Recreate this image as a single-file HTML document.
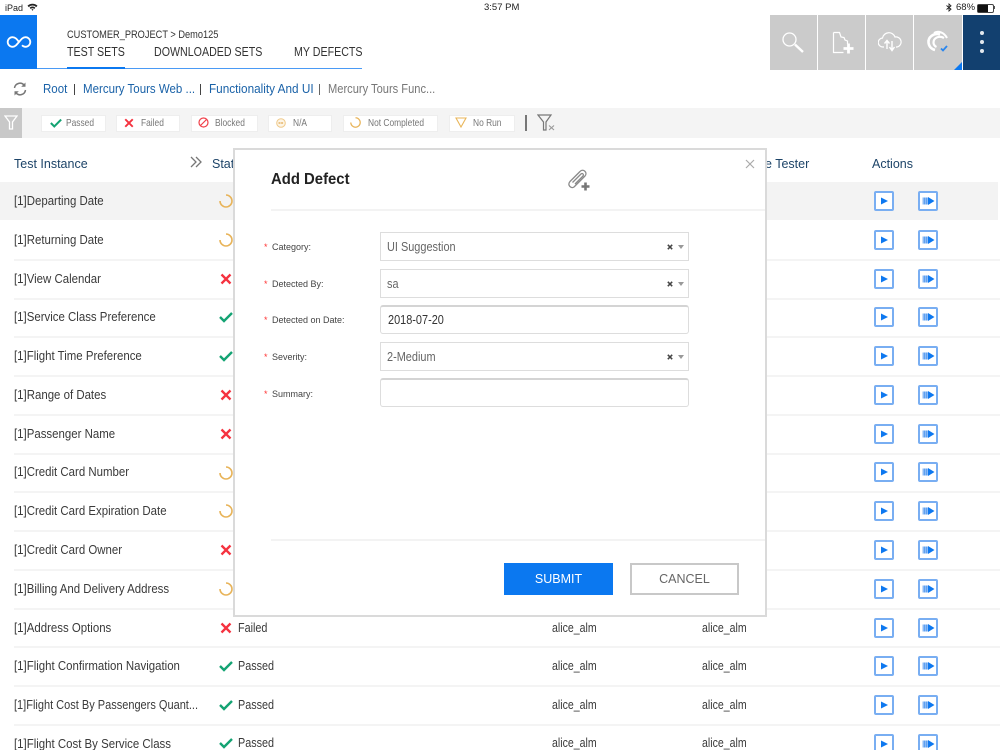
<!DOCTYPE html>
<html><head><meta charset="utf-8"><style>
html,body{margin:0;padding:0;background:#fff}
#p{position:relative;width:1000px;height:750px;overflow:hidden;background:#fff;font-family:"Liberation Sans",sans-serif;color:#333}
#p div,#p svg,#p span{position:absolute}
.t{white-space:nowrap;line-height:16px;font-size:12px;transform-origin:0 50%}
.n{left:14px;font-size:12.5px;color:#3a3a3a;transform:scaleX(.915)}
.l{height:2px;left:14px;width:986px;background:#f4f4f4}
.c{top:115px;height:15px;background:#fff;border:1px solid #eee}
.f{font-size:10.5px;color:#777;transform:scaleX(.8);top:115px}
.bl{color:#1a62a8;font-size:13px;top:81px;transform:scaleX(.885)}
.h{top:156px;font-size:12.5px;color:#1d4468}
.lab{left:272px;font-size:9px;color:#444}
.st{left:264px;font-size:9px;color:#f33}
.inp{left:380px;width:307px;height:27px;background:#fff;border:1px solid #ddd}
.r{border-radius:3px;border-top:2px solid #d4d4d4;height:26px}
.v{left:387px;font-size:13px;color:#666;transform:scaleX(.84)}
.ar{left:678px;width:0;height:0;border-left:3px solid transparent;border-right:3px solid transparent;border-top:4px solid #999}
.tb{top:15px;width:47px;height:55px;background:#cbcbcb}
.d{font-size:12.5px;color:#3a3a3a;transform:scaleX(.865)}
.a{transform:scaleX(.845)}
.hd{font-size:13px;top:44px;color:#333;transform:scaleX(.82)}
</style></head><body><div id="p">
<svg width="0" height="0"><defs>
<g id="pa"><rect x="1" y="1" width="18" height="18" fill="#fff" stroke="#79aef2" stroke-width="2" rx="1"/><path d="M7 6.500L14 10L7 13.500Z" fill="#0d78f0"/></g>
<g id="pb"><rect x="1" y="1" width="18" height="18" fill="#fff" stroke="#79aef2" stroke-width="2" rx="1"/><path d="M4.500 6.500h5.500v7H4.500z" fill="#8dbbf5"/><path d="M6 6.500h.7v7H6zM8 6.500h.7v7H8z" fill="#4c96ee"/><path d="M10 6L16.500 10L10 14Z" fill="#0d78f0"/></g>
<path id="ok" d="M1 7L5 11L13 3" fill="none" stroke="#14a373" stroke-width="2.4"/>
<path id="no" d="M1.500 1.500L10.500 10.500M10.500 1.500L1.500 10.500" fill="none" stroke="#f5323f" stroke-width="2.300"/>
<path id="sp" d="M7 1A6 6 0 1 1 1 7" fill="none" stroke="#e8b45a" stroke-width="1.600"/>
</defs></svg>

<!-- status bar -->
<div class="t" style="left:5px;top:0;font-size:9px;color:#222">iPad</div>
<svg style="left:27px;top:3px" width="11" height="8" viewBox="0 0 11 8"><path d="M0.500 2.800A7 7 0 0 1 10.500 2.800L9.200 4.100A5.200 5.200 0 0 0 1.800 4.100ZM2.600 4.800A4 4 0 0 1 8.400 4.800L7.200 6A2.400 2.400 0 0 0 3.800 6ZM4.500 6.600A1.200 1.200 0 0 1 6.500 6.600L5.500 7.800Z" fill="#222"/></svg>
<div class="t" style="left:484px;top:0;font-size:9.500px;color:#222">3:57 PM</div>
<svg style="left:946px;top:3px" width="6" height="9" viewBox="0 0 6 9"><path d="M0.500 2.500L5 6.200L3 8V1L5 2.800L0.500 6.500" fill="none" stroke="#222" stroke-width="0.900"/></svg>
<div class="t" style="left:956px;top:0;font-size:9.500px;color:#222">68%</div>
<div style="left:977px;top:4px;width:15px;height:7px;border:1px solid #444;border-radius:2px"></div>
<div style="left:978px;top:5px;width:10px;height:7px;background:#111"></div>
<div style="left:994px;top:6px;width:1px;height:3px;background:#555"></div>

<!-- header -->
<div style="left:0;top:15px;width:37px;height:54px;background:#0b78f0"></div>
<svg style="left:6px;top:34px" width="26" height="16" viewBox="0 0 26 16"><path d="M13 8C10.500 4.500 9 3.200 6.500 3.200A4.800 4.800 0 0 0 6.500 12.800C9 12.800 10.500 11 13 8C15.500 5 17 3.200 19.500 3.200A4.800 4.800 0 0 1 19.500 12.800C18 12.800 17 12.200 16 11.200" fill="none" stroke="#fff" stroke-width="1.800"/></svg>
<div class="t" style="left:67px;top:27px;font-size:11px;color:#333;transform:scaleX(.84)">CUSTOMER_PROJECT &gt; Demo125</div>
<div class="t hd" style="left:67px">TEST SETS</div>
<div class="t hd" style="left:154px">DOWNLOADED SETS</div>
<div class="t hd" style="left:294px">MY DEFECTS</div>
<div style="left:37px;top:68px;width:325px;height:1px;background:#4a9af5"></div>
<div style="left:67px;top:67px;width:58px;height:2px;background:#0b78f0"></div>

<div class="tb" style="left:770px"></div><div class="tb" style="left:818px"></div><div class="tb" style="left:866px"></div><div class="tb" style="left:914px;width:48px"></div>
<div style="left:963px;top:15px;width:37px;height:55px;background:#12406f"></div>
<svg style="left:780px;top:30px" width="26" height="24" viewBox="0 0 26 24"><circle cx="9.500" cy="9.500" r="6.500" fill="none" stroke="#fff" stroke-width="1.300"/><path d="M15 14.500L23 22" stroke="#fff" stroke-width="2.400"/></svg>
<svg style="left:832px;top:31px" width="24" height="24" viewBox="0 0 24 24"><path d="M1.500 1.500H7.500L9 6L12 6.500L13 9L15.500 10V13M1.500 1.500V21.500H11.500" fill="none" stroke="#fff" stroke-width="1.200"/><path d="M16.500 12.500V22.500M11.500 17.500H21.500" stroke="#fff" stroke-width="2.800"/></svg>
<svg style="left:878px;top:30px" width="24" height="24" viewBox="0 0 24 24"><path d="M6 17H5A4.500 4.500 0 0 1 4.500 8A6.500 6.500 0 0 1 17 7A5 5 0 0 1 19 17H18" fill="none" stroke="#fff" stroke-width="1.200"/><path d="M9 19V11M6.500 13.500L9 10.500L11.500 13.500M14 11V19.500M11.500 17L14 20.500L16.500 17" fill="none" stroke="#fff" stroke-width="1.400"/></svg>
<svg style="left:925px;top:29px" width="26" height="25" viewBox="0 0 26 25"><path d="M9 4C13 1.500 19 3 22 9" fill="none" stroke="#fff" stroke-width="2"/><path d="M15 5.500C9 3.500 3 8 3.500 13.500C3.800 17 6 20 10 21" fill="none" stroke="#fff" stroke-width="2.600"/><path d="M19 9C14 6 8.500 9 8.500 13.500C8.500 15.500 9.500 17 11.500 18" fill="none" stroke="#fff" stroke-width="2.200"/><path d="M16 19.500L18 21.500L22 17" fill="none" stroke="#2a86ee" stroke-width="1.800"/></svg>
<div style="left:954px;top:62px;width:0;height:0;border-left:8px solid transparent;border-bottom:8px solid #0b78f0"></div>
<div style="left:979.500px;top:31px;width:4px;height:4px;background:#e2e8ee;border-radius:50%"></div>
<div style="left:979.500px;top:40px;width:4px;height:4px;background:#e2e8ee;border-radius:50%"></div>
<div style="left:979.500px;top:49px;width:4px;height:4px;background:#e2e8ee;border-radius:50%"></div>

<!-- breadcrumbs -->
<svg style="left:13px;top:82px" width="14" height="14" viewBox="0 0 14 14"><path d="M1.500 6A5.500 5.500 0 0 1 11 3M12.500 8A5.500 5.500 0 0 1 3 11" fill="none" stroke="#777" stroke-width="1.500"/><path d="M12.500 0.500V4.800H8.200ZM1.500 13.500V9.200H5.800Z" fill="#777"/></svg>
<div class="t bl" style="left:43px">Root</div>
<div style="left:74px;top:84px;width:1px;height:11px;background:#444"></div>
<div class="t bl" style="left:83px">Mercury Tours Web ...</div>
<div style="left:200px;top:84px;width:1px;height:11px;background:#444"></div>
<div class="t bl" style="left:209px;transform:scaleX(.905)">Functionality And UI</div>
<div style="left:319px;top:84px;width:1px;height:11px;background:#666"></div>
<div class="t bl" style="left:328px;color:#777;transform:scaleX(.855)">Mercury Tours Func...</div>

<!-- filter bar -->
<div style="left:0;top:108px;width:1000px;height:30px;background:#f4f4f4"></div>
<div style="left:0;top:108px;width:22px;height:30px;background:#c8c8c8"></div>
<svg style="left:4px;top:115px" width="14" height="15" viewBox="0 0 14 15"><path d="M1 1H13L8.500 7V14H5.500V7Z" fill="none" stroke="#fff" stroke-width="1.300"/></svg>

<div class="c" style="left:41px;width:63px"></div>
<svg style="left:49px;top:117px" width="14" height="12" viewBox="0 0 14 14"><use href="#ok"/></svg>
<div class="t f" style="left:66px">Passed</div>
<div class="c" style="left:116px;width:62px"></div>
<svg style="left:124px;top:118px" width="10" height="10" viewBox="0 0 12 12"><use href="#no"/></svg>
<div class="t f" style="left:141px">Failed</div>
<div class="c" style="left:191px;width:65px"></div>
<svg style="left:198px;top:117px" width="11" height="11" viewBox="0 0 11 11"><circle cx="5.500" cy="5.500" r="4.500" fill="none" stroke="#f0404a" stroke-width="1.200"/><path d="M2.500 8.500L8.500 2.500" stroke="#f0404a" stroke-width="1.200"/></svg>
<div class="t f" style="left:215px">Blocked</div>
<div class="c" style="left:268px;width:62px"></div>
<svg style="left:276px;top:118px" width="10" height="10" viewBox="0 0 10 10"><circle cx="5" cy="5" r="4.300" fill="#fdf5e6" stroke="#efc98a" stroke-width="1"/><path d="M2.500 5H7.500" stroke="#e5b468" stroke-width="1.400" stroke-dasharray="2 .6"/></svg>
<div class="t f" style="left:293px">N/A</div>
<div class="c" style="left:343px;width:93px"></div>
<svg style="left:350px;top:117px" width="11" height="11" viewBox="0 0 14 14"><use href="#sp"/></svg>
<div class="t f" style="left:368px">Not Completed</div>
<div class="c" style="left:449px;width:64px"></div>
<svg style="left:455px;top:117px" width="12" height="11" viewBox="0 0 12 11"><path d="M1 1H11L6 10Z" fill="none" stroke="#e9b65a" stroke-width="1.100"/></svg>
<div class="t f" style="left:473px">No Run</div>
<div style="left:525px;top:115px;width:2px;height:16px;background:#777"></div>
<svg style="left:537px;top:114px" width="19" height="17" viewBox="0 0 19 17"><path d="M1 1H14L9 8V16H6.500V8Z" fill="none" stroke="#777" stroke-width="1.200"/><path d="M12 11.500L17 16M17 11.500L12 16" stroke="#999" stroke-width="1.100"/></svg>

<!-- table head -->
<div class="t h" style="left:14px">Test Instance</div>
<svg style="left:190px;top:156px" width="13" height="12" viewBox="0 0 13 12"><path d="M1 1L6 6L1 11M6 1L11 6L6 11" fill="none" stroke="#777" stroke-width="1.300"/></svg>
<div class="t h" style="left:212px">Status</div>
<div class="t h" style="left:765px">e Tester</div>
<div class="t h" style="left:872px">Actions</div>

<!-- rows -->
<div style="left:0;top:182px;width:998px;height:38px;background:#f3f3f3"></div>
<div class="l" style="top:259px"></div><div class="l" style="top:298px"></div><div class="l" style="top:336px"></div><div class="l" style="top:375px"></div><div class="l" style="top:414px"></div><div class="l" style="top:453px"></div><div class="l" style="top:491px"></div><div class="l" style="top:530px"></div><div class="l" style="top:569px"></div><div class="l" style="top:608px"></div><div class="l" style="top:646px"></div><div class="l" style="top:685px"></div><div class="l" style="top:724px"></div>

<div class="t n" style="top:193px">[1]Departing Date</div>
<div class="t n" style="top:232px">[1]Returning Date</div>
<div class="t n" style="top:271px">[1]View Calendar</div>
<div class="t n" style="top:309px">[1]Service Class Preference</div>
<div class="t n" style="top:348px">[1]Flight Time Preference</div>
<div class="t n" style="top:387px">[1]Range of Dates</div>
<div class="t n" style="top:426px">[1]Passenger Name</div>
<div class="t n" style="top:464px">[1]Credit Card Number</div>
<div class="t n" style="top:503px">[1]Credit Card Expiration Date</div>
<div class="t n" style="top:542px">[1]Credit Card Owner</div>
<div class="t n" style="top:581px">[1]Billing And Delivery Address</div>
<div class="t n" style="top:620px">[1]Address Options</div>
<div class="t n" style="top:658px">[1]Flight Confirmation Navigation</div>
<div class="t n" style="top:697px;transform:scaleX(.88)">[1]Flight Cost By Passengers Quant...</div>
<div class="t n" style="top:736px">[1]Flight Cost By Service Class</div>

<svg style="left:218.500px;top:194px" width="14" height="14"><use href="#sp"/></svg>
<svg style="left:218.500px;top:233px" width="14" height="14"><use href="#sp"/></svg>
<svg style="left:220px;top:273px" width="12" height="12"><use href="#no"/></svg>
<svg style="left:219px;top:310px" width="14" height="14"><use href="#ok"/></svg>
<svg style="left:219px;top:349px" width="14" height="14"><use href="#ok"/></svg>
<svg style="left:220px;top:389px" width="12" height="12"><use href="#no"/></svg>
<svg style="left:220px;top:428px" width="12" height="12"><use href="#no"/></svg>
<svg style="left:218.500px;top:466px" width="14" height="14"><use href="#sp"/></svg>
<svg style="left:218.500px;top:504px" width="14" height="14"><use href="#sp"/></svg>
<svg style="left:220px;top:544px" width="12" height="12"><use href="#no"/></svg>
<svg style="left:218.500px;top:582px" width="14" height="14"><use href="#sp"/></svg>
<svg style="left:220px;top:622px" width="12" height="12"><use href="#no"/></svg>
<svg style="left:219px;top:659px" width="14" height="14"><use href="#ok"/></svg>
<svg style="left:219px;top:698px" width="14" height="14"><use href="#ok"/></svg>
<svg style="left:219px;top:736px" width="14" height="14"><use href="#ok"/></svg>

<div class="t d" style="left:238px;top:620px">Failed</div>
<div class="t d" style="left:238px;top:658px">Passed</div>
<div class="t d" style="left:238px;top:697px">Passed</div>
<div class="t d" style="left:238px;top:735px">Passed</div>
<div class="t d a" style="left:552px;top:620px">alice_alm</div><div class="t d a" style="left:702px;top:620px">alice_alm</div>
<div class="t d a" style="left:552px;top:658px">alice_alm</div><div class="t d a" style="left:702px;top:658px">alice_alm</div>
<div class="t d a" style="left:552px;top:697px">alice_alm</div><div class="t d a" style="left:702px;top:697px">alice_alm</div>
<div class="t d a" style="left:552px;top:735px">alice_alm</div><div class="t d a" style="left:702px;top:735px">alice_alm</div>

<svg style="left:874px;top:191px" width="20" height="20"><use href="#pa"/></svg><svg style="left:918px;top:191px" width="20" height="20"><use href="#pb"/></svg>
<svg style="left:874px;top:230px" width="20" height="20"><use href="#pa"/></svg><svg style="left:918px;top:230px" width="20" height="20"><use href="#pb"/></svg>
<svg style="left:874px;top:269px" width="20" height="20"><use href="#pa"/></svg><svg style="left:918px;top:269px" width="20" height="20"><use href="#pb"/></svg>
<svg style="left:874px;top:307px" width="20" height="20"><use href="#pa"/></svg><svg style="left:918px;top:307px" width="20" height="20"><use href="#pb"/></svg>
<svg style="left:874px;top:346px" width="20" height="20"><use href="#pa"/></svg><svg style="left:918px;top:346px" width="20" height="20"><use href="#pb"/></svg>
<svg style="left:874px;top:385px" width="20" height="20"><use href="#pa"/></svg><svg style="left:918px;top:385px" width="20" height="20"><use href="#pb"/></svg>
<svg style="left:874px;top:424px" width="20" height="20"><use href="#pa"/></svg><svg style="left:918px;top:424px" width="20" height="20"><use href="#pb"/></svg>
<svg style="left:874px;top:462px" width="20" height="20"><use href="#pa"/></svg><svg style="left:918px;top:462px" width="20" height="20"><use href="#pb"/></svg>
<svg style="left:874px;top:501px" width="20" height="20"><use href="#pa"/></svg><svg style="left:918px;top:501px" width="20" height="20"><use href="#pb"/></svg>
<svg style="left:874px;top:540px" width="20" height="20"><use href="#pa"/></svg><svg style="left:918px;top:540px" width="20" height="20"><use href="#pb"/></svg>
<svg style="left:874px;top:579px" width="20" height="20"><use href="#pa"/></svg><svg style="left:918px;top:579px" width="20" height="20"><use href="#pb"/></svg>
<svg style="left:874px;top:618px" width="20" height="20"><use href="#pa"/></svg><svg style="left:918px;top:618px" width="20" height="20"><use href="#pb"/></svg>
<svg style="left:874px;top:656px" width="20" height="20"><use href="#pa"/></svg><svg style="left:918px;top:656px" width="20" height="20"><use href="#pb"/></svg>
<svg style="left:874px;top:695px" width="20" height="20"><use href="#pa"/></svg><svg style="left:918px;top:695px" width="20" height="20"><use href="#pb"/></svg>
<svg style="left:874px;top:734px" width="20" height="20"><use href="#pa"/></svg><svg style="left:918px;top:734px" width="20" height="20"><use href="#pb"/></svg>

<!-- modal -->
<div style="left:233px;top:148px;width:530px;height:465px;background:#fff;border:2px solid #dadada"></div>
<div class="t" style="left:271px;top:172px;font-size:16px;color:#222;font-weight:bold;transform:scaleX(.93)">Add Defect</div>
<svg style="left:567px;top:168px" width="25" height="24" viewBox="0 0 25 24"><path d="M7 19L18 8C21 4.500 16 0 13 3.500L3 13.500C0 17 4 21 7 19M5.500 14.500L14 6C15.500 4.500 17 6.500 16 8L8 16" fill="none" stroke="#8a8a8a" stroke-width="1.300"/><path d="M18.500 14.500V22.500M14.500 18.500H22.500" stroke="#777" stroke-width="2.600"/></svg>
<svg style="left:745px;top:159px" width="10" height="10" viewBox="0 0 10 10"><path d="M1 1L9 9M9 1L1 9" stroke="#aaa" stroke-width="1.200"/></svg>
<div style="left:271px;top:209px;width:494px;height:2px;background:#f3f3f3"></div>
<div style="left:271px;top:539px;width:494px;height:2px;background:#f3f3f3"></div>

<div class="t st" style="top:239px">*</div><div class="t lab" style="top:239px">Category:</div>
<div class="t st" style="top:276px">*</div><div class="t lab" style="top:276px">Detected By:</div>
<div class="t st" style="top:312px">*</div><div class="t lab" style="top:312px">Detected on Date:</div>
<div class="t st" style="top:349px">*</div><div class="t lab" style="top:349px">Severity:</div>
<div class="t st" style="top:386px">*</div><div class="t lab" style="top:386px">Summary:</div>

<div class="inp" style="top:232px"></div>
<div class="inp" style="top:269px"></div>
<div class="inp r" style="top:305px"></div>
<div class="inp" style="top:342px"></div>
<div class="inp r" style="top:378px"></div>
<div class="t v" style="top:239px">UI Suggestion</div>
<div class="t v" style="top:276px">sa</div>
<div class="t v" style="top:312px;left:388px;color:#333">2018-07-20</div>
<div class="t v" style="top:349px">2-Medium</div>
<svg style="left:667px;top:244px" width="6" height="6"><path d="M.8 .8L5.200 5.200M5.200 .8L.8 5.200" stroke="#444" stroke-width="1.500"/></svg><div class="ar" style="top:245px"></div>
<svg style="left:667px;top:281px" width="6" height="6"><path d="M.8 .8L5.200 5.200M5.200 .8L.8 5.200" stroke="#444" stroke-width="1.500"/></svg><div class="ar" style="top:282px"></div>
<svg style="left:667px;top:354px" width="6" height="6"><path d="M.8 .8L5.200 5.200M5.200 .8L.8 5.200" stroke="#444" stroke-width="1.500"/></svg><div class="ar" style="top:355px"></div>
<div class="t" style="left:504px;top:563px;width:109px;height:32px;line-height:32px;background:#0b78f0;color:#fff;font-size:12.500px;text-align:center">SUBMIT</div>
<div class="t" style="left:630px;top:563px;width:105px;height:28px;line-height:28px;background:#fff;border:2px solid #c8c8c8;color:#666;font-size:12.500px;text-align:center">CANCEL</div>
</div></body></html>
